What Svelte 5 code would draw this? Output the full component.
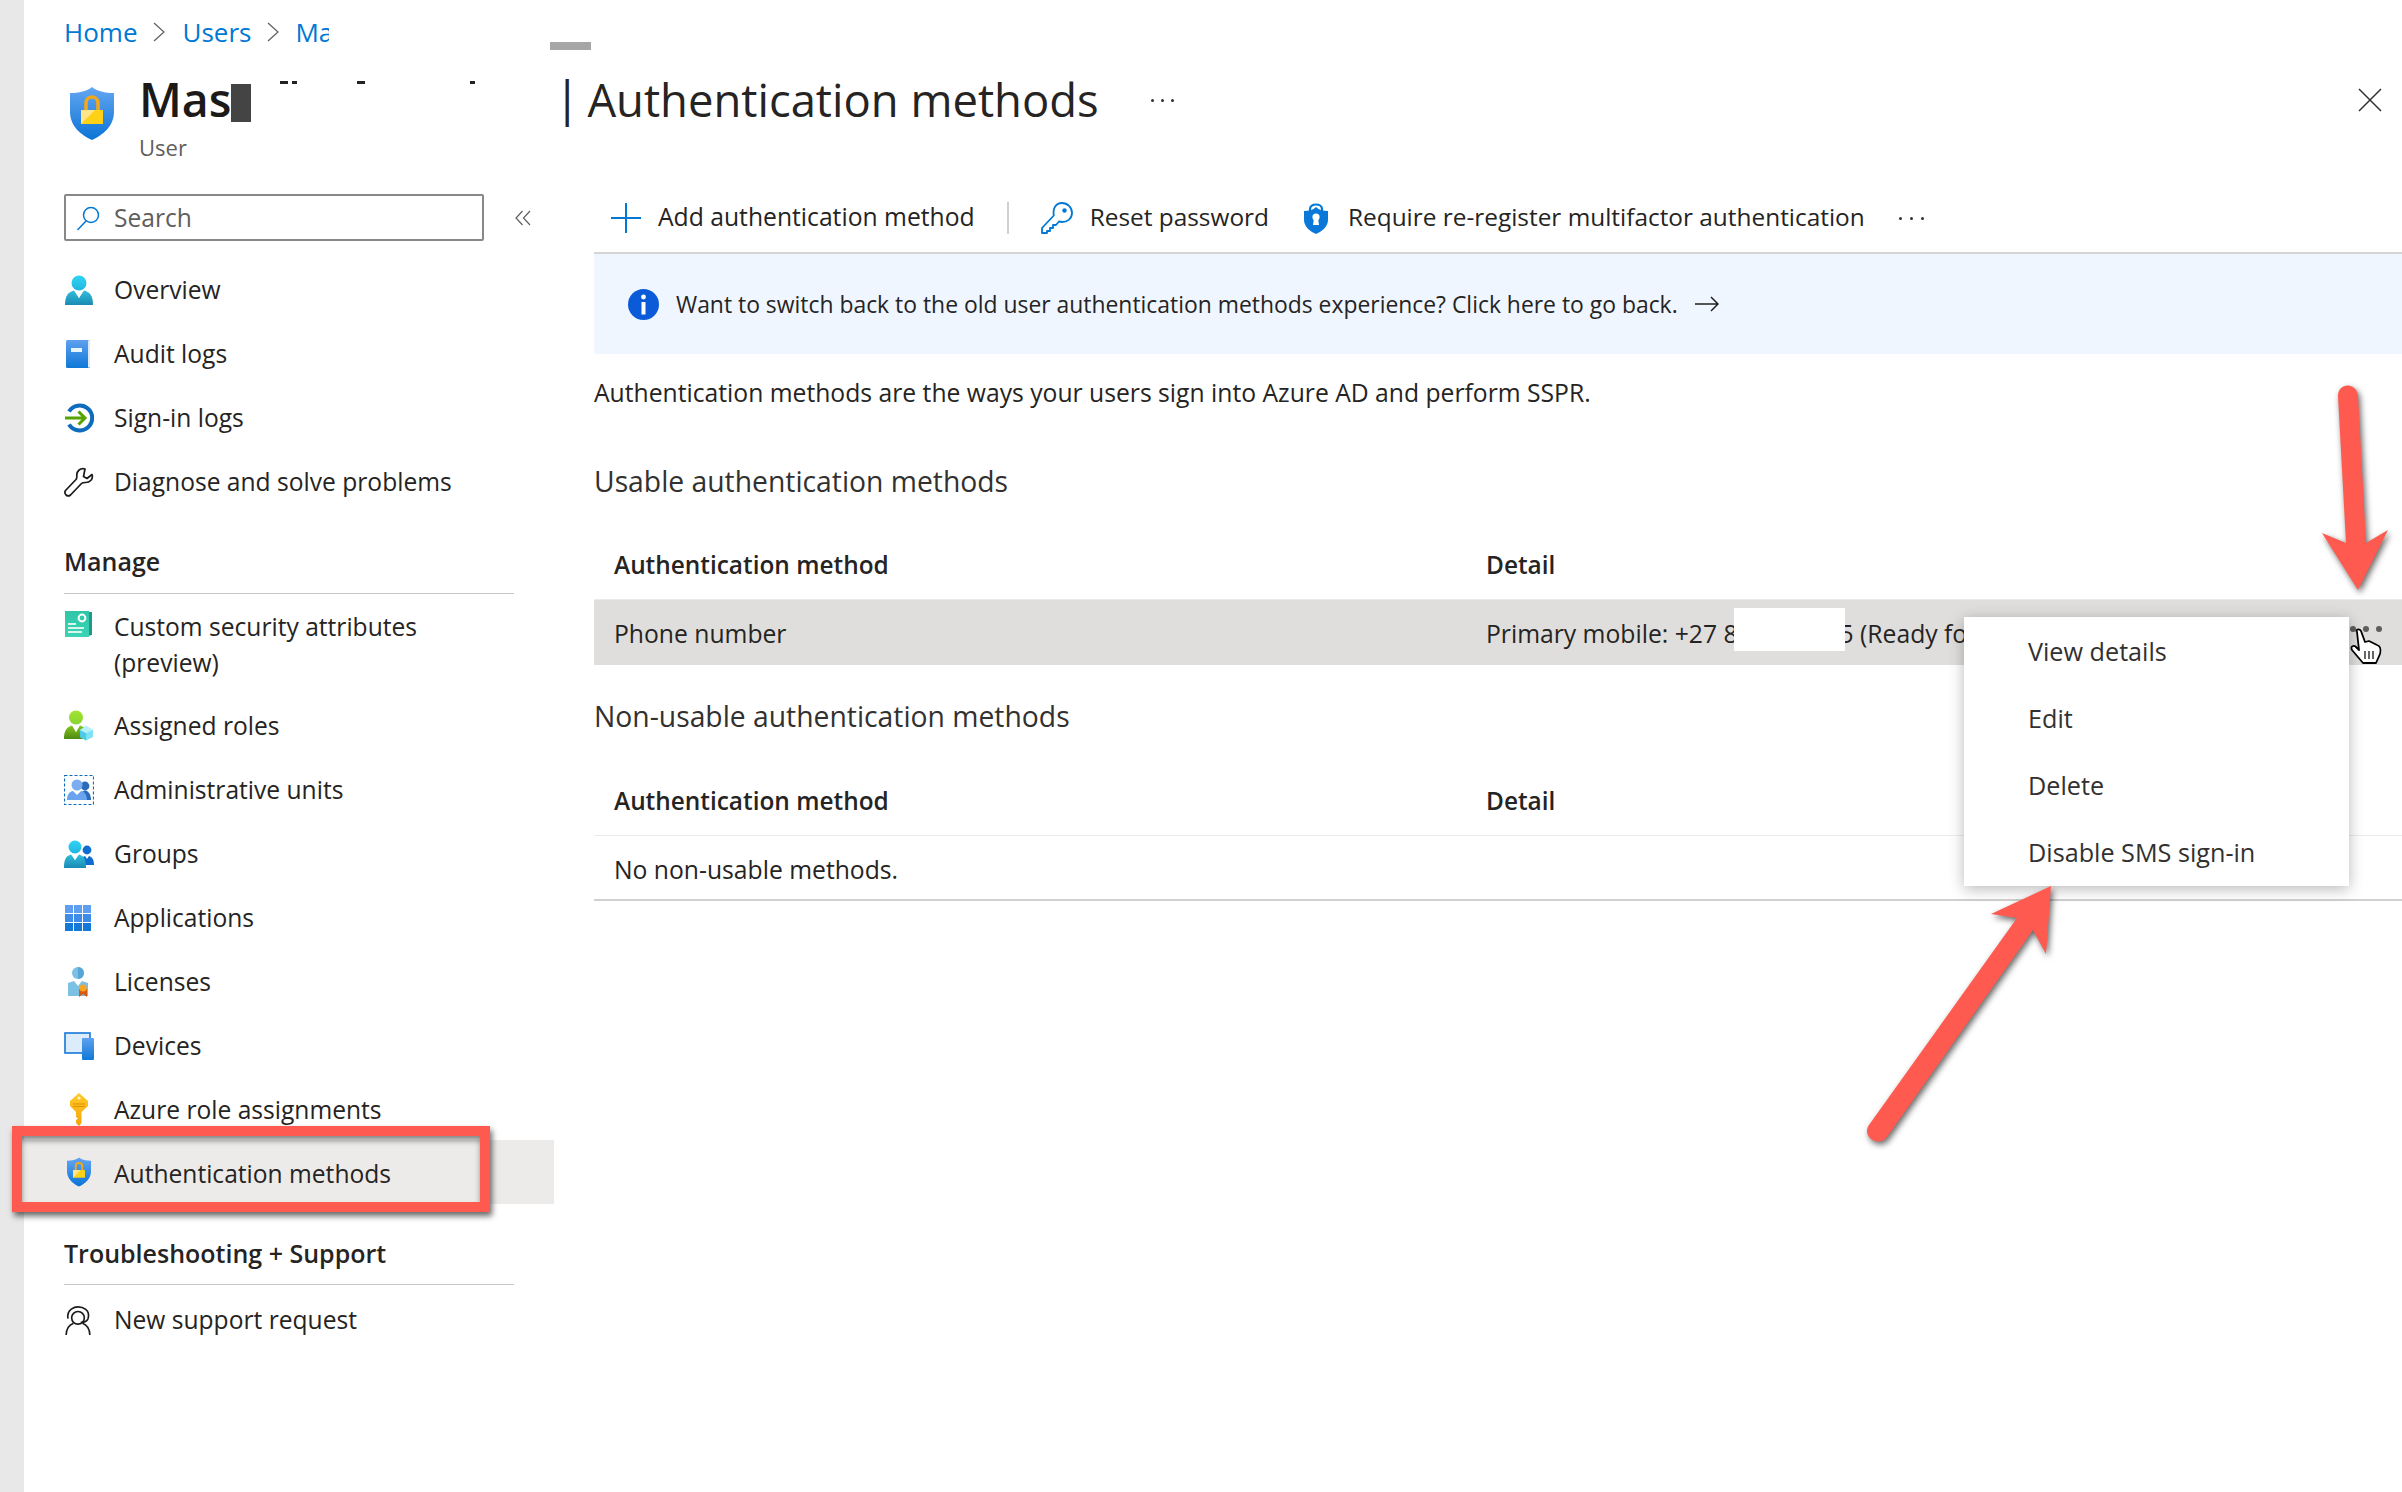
<script>
  const top = [
    { id: 'person', label: 'Overview' },
    { id: 'book', label: 'Audit logs' },
    { id: 'signin', label: 'Sign-in logs' },
    { id: 'wrench', label: 'Diagnose and solve problems' }
  ];
  const manage = [
    { id: 'card', label: 'Custom security attributes (preview)', tall: true },
    { id: 'roles', label: 'Assigned roles' },
    { id: 'admin', label: 'Administrative units' },
    { id: 'groups', label: 'Groups' },
    { id: 'apps', label: 'Applications' },
    { id: 'license', label: 'Licenses' },
    { id: 'devices', label: 'Devices' },
    { id: 'key', label: 'Azure role assignments' },
    { id: 'shield', label: 'Authentication methods', active: true }
  ];
  const menu = ['View details', 'Edit', 'Delete', 'Disable SMS sign-in'];
</script>

{#snippet shield(w, h)}
  <svg width={w} height={h} viewBox="0 0 44 53">
    <path d="M22 0C27 4 35 6 44 6V25C44 39 33 48 22 53C11 48 0 39 0 25V6C9 6 17 4 22 0Z" fill="url(#gShield)" />
    <path d="M16 24V16C16 8 28 8 28 16V24" fill="none" stroke="#f0a81c" stroke-width="3.6" />
    <rect x="11" y="23" width="22" height="14" fill="#fcd116" />
    <path d="M11 37L25 23H11Z" fill="#ffe58a" />
  </svg>
{/snippet}

{#snippet icon(id)}
  {#if id === 'person'}
    <svg width="30" height="30" viewBox="0 0 30 30">
      <circle cx="15" cy="8" r="7.5" fill="url(#gCyan)" />
      <path d="M1 30C1 21 4 17 10 15.5L15 23L20 15.5C26 17 29 21 29 30Z" fill="url(#gCyanB)" />
      <path d="M12 17L15 23L18 17Z" fill="#fff" />
    </svg>
  {:else if id === 'book'}
    <svg width="28" height="30" viewBox="0 0 28 30">
      <rect x="2" y="1" width="24" height="28" rx="1.5" fill="url(#gBlue)" />
      <rect x="24" y="1.5" width="2" height="27" fill="#dcebfa" />
      <rect x="7" y="9" width="11" height="4" fill="#eaf4fd" />
    </svg>
  {:else if id === 'signin'}
    <svg width="30" height="30" viewBox="0 0 30 30">
      <path d="M5 8.5A12.5 12.5 0 1 1 5 21.5" fill="none" stroke="#0f6cbd" stroke-width="4" />
      <path d="M1 15H21M14.5 8.5L21 15L14.5 21.5" fill="none" stroke="#57a300" stroke-width="3" />
    </svg>
  {:else if id === 'wrench'}
    <svg width="30" height="30" viewBox="0 0 30 30">
      <path d="M28 7.5L23 11.5L19.5 9.5L21 2C16.5.5 12.5 4 12.8 8.5C12.9 10 13 11.5 12 12.5L1.5 23.5C-.5 27 3.5 30.5 6.5 28L17.5 16.5C18.5 15.5 20 15.5 21.5 15.5C26 15.5 29.5 12 28 7.5Z" fill="#fff" stroke="#1b1a19" stroke-width="1.7" stroke-linejoin="round" />
    </svg>
  {:else if id === 'card'}
    <svg width="30" height="30" viewBox="0 0 30 30">
      <path d="M3 3H28V26L20 28H3Z" fill="#1d9a8a" />
      <rect x="1" y="2" width="24" height="26" fill="url(#gTeal)" />
      <circle cx="18" cy="9" r="3.4" fill="none" stroke="#fff" stroke-width="2" />
      <path d="M4 15H12M4 19H20M4 23H18" stroke="#d8f5ee" stroke-width="1.8" />
    </svg>
  {:else if id === 'roles'}
    <svg width="30" height="32" viewBox="0 0 30 32">
      <circle cx="12" cy="7.5" r="7" fill="url(#gGreen)" />
      <path d="M0 29C0 20 3 17 8 15.5L12 22L16 15.5C21 17 24 20 24 29Z" fill="url(#gGreenB)" />
      <path d="M10 17L12 22L14 17Z" fill="#fff" />
      <path d="M22 16L29 20V27L22 30.5L16 27V20Z" fill="#7de3f4" />
      <path d="M22 23V30.5L16 27V20Z" fill="#4fc9e8" />
      <path d="M22 23L29 20L22 16L16 20Z" fill="#b6f0fa" />
    </svg>
  {:else if id === 'admin'}
    <svg width="30" height="30" viewBox="0 0 30 30">
      <rect x=".5" y=".5" width="29" height="29" fill="#fff" stroke="#0f6cbd" stroke-width="1.2" stroke-dasharray="3 2" />
      <circle cx="21" cy="11" r="4.4" fill="#2b6cb8" />
      <path d="M16 25C16 19 18 16 21 15.500C25 16 27 20 27 25Z" fill="#2b6cb8" />
      <circle cx="13" cy="10" r="5.500" fill="#7aaef0" />
      <path d="M3 25C3 19 6 16.500 9 16L13 20L17 16C20 16.500 23 19 23 25Z" fill="#6aa3ee" />
    </svg>
  {:else if id === 'groups'}
    <svg width="30" height="30" viewBox="0 0 30 30">
      <circle cx="23" cy="11" r="4.4" fill="#0f6cd0" />
      <path d="M16 26C16 20 18 18 21 17L23 20L25 17C28 18 30 20 30 26Z" fill="#0f6cd0" />
      <circle cx="11" cy="8" r="6.5" fill="url(#gCyan)" />
      <path d="M0 29C0 20 2 17 7 15.5L11 21L15 15.5C20 17 22 20 22 29Z" fill="url(#gCyanB)" />
      <path d="M9 17L11 21L13 17Z" fill="#fff" />
    </svg>
  {:else if id === 'apps'}
    <svg width="28" height="28" viewBox="0 0 28 28">
      <g fill="#5ea0ef"><rect x="1" y="1" width="8" height="8" /><rect x="10" y="1" width="8" height="8" /><rect x="19" y="1" width="8" height="8" /></g>
      <g fill="#3d8ce8"><rect x="1" y="10" width="8" height="8" /><rect x="10" y="10" width="8" height="8" /><rect x="19" y="10" width="8" height="8" /></g>
      <g fill="#1478d8"><rect x="1" y="19" width="8" height="8" /><rect x="10" y="19" width="8" height="8" /><rect x="19" y="19" width="8" height="8" /></g>
    </svg>
  {:else if id === 'license'}
    <svg width="30" height="32" viewBox="0 0 30 32">
      <circle cx="14" cy="7" r="6" fill="#7cc0e4" />
      <path d="M14 1A6 6 0 0 1 14 13Z" fill="#58a6d6" />
      <path d="M4 30V17L10 15L14 20L18 15L24 17V30Z" fill="#7cc0e4" />
      <path d="M15 23H23V31L19 28L15 31Z" fill="#d9590f" />
      <circle cx="19" cy="22" r="3.6" fill="#f6a623" />
    </svg>
  {:else if id === 'devices'}
    <svg width="30" height="30" viewBox="0 0 30 30">
      <rect x="1" y="2" width="25" height="20" fill="#dcecfb" stroke="#1478d8" stroke-width="1.6" />
      <rect x="18" y="7" width="12" height="22" rx="1" fill="url(#gBlue)" />
    </svg>
  {:else if id === 'key'}
    <svg width="30" height="34" viewBox="-5 0 30 34">
      <path d="M10 0L19 8V13L12.5 19V30L10 33L7 30V27L9 25.5L7 24V19L1 13V8Z" fill="url(#gKey)" />
      <circle cx="10" cy="5" r="1.6" fill="#fff6c8" />
      <path d="M4 11H16M4 13.5H16" stroke="#e08a00" stroke-width=".9" />
    </svg>
  {:else if id === 'shield'}
    <span class="shift">{@render shield(24, 30)}</span>
  {:else if id === 'support'}
    <svg width="28" height="30" viewBox="0 0 30 33">
      <g fill="none" stroke="#1b1a19" stroke-width="1.8">
        <circle cx="15" cy="13" r="7" />
        <path d="M4 14C2 3 12 1 15 1C20 1 29 4 26 14C25 17 22 18 18 18" />
        <path d="M2 32C2 25 5 21 10 19M28 32C28 25 25 21 20 19" />
      </g>
    </svg>
  {/if}
{/snippet}

{#snippet navrow(item)}
  <div class="row" class:tall={item.tall} class:active={item.active} class:last={item.id === 'support'}>
    <span class="ico">{@render icon(item.id)}</span>
    <span class="lbl">{item.label}</span>
  </div>
{/snippet}

<svg class="defs" width="0" height="0" aria-hidden="true">
  <defs>
    <linearGradient id="gShield" x1="0" y1="0" x2="0" y2="1"><stop offset="0" stop-color="#65a6f2" /><stop offset="1" stop-color="#0a74d6" /></linearGradient>
    <linearGradient id="gCyan" x1="0" y1="0" x2="0" y2="1"><stop offset="0" stop-color="#32d4f5" /><stop offset="1" stop-color="#1fb6df" /></linearGradient>
    <linearGradient id="gCyanB" x1="0" y1="0" x2="0" y2="1"><stop offset="0" stop-color="#32bedd" /><stop offset="1" stop-color="#198ab3" /></linearGradient>
    <linearGradient id="gBlue" x1="0" y1="0" x2="0" y2="1"><stop offset="0" stop-color="#5ea0ef" /><stop offset="1" stop-color="#0f78d8" /></linearGradient>
    <linearGradient id="gTeal" x1="0" y1="0" x2="0" y2="1"><stop offset="0" stop-color="#2fc6a8" /><stop offset="1" stop-color="#3cd4b4" /></linearGradient>
    <linearGradient id="gGreen" x1="0" y1="0" x2="0" y2="1"><stop offset="0" stop-color="#a4e32d" /><stop offset="1" stop-color="#86d633" /></linearGradient>
    <linearGradient id="gGreenB" x1="0" y1="0" x2="0" y2="1"><stop offset="0" stop-color="#86c61e" /><stop offset="1" stop-color="#4c8a12" /></linearGradient>
    <linearGradient id="gKey" x1="0" y1="0" x2="0" y2="1"><stop offset="0" stop-color="#ffca28" /><stop offset="1" stop-color="#f5a50a" /></linearGradient>
  </defs>
</svg>

<div class="page">
  <div class="strip"></div>

  <aside class="side">
    <nav class="crumbs">
      <a href="#home">Home</a><svg class="chev" width="12" height="20" viewBox="0 0 12 20"><path d="M1 1L11 10L1 19" fill="none" stroke="#605e5c" stroke-width="1.2" /></svg>
      <a class="users" href="#users">Users</a><svg class="chev" width="12" height="20" viewBox="0 0 12 20"><path d="M1 1L11 10L1 19" fill="none" stroke="#605e5c" stroke-width="1.2" /></svg>
      <a class="clip" href="#ma">Ma</a>
    </nav>
    <header class="res">
      <span class="res-ico">{@render shield(44, 53)}</span>
      <div>
        <div class="res-name">Mas<span class="block"></span></div>
        <div class="res-type">User</div>
      </div>
    </header>
    <div class="searchline">
      <label class="search">
        <svg width="24" height="26" viewBox="0 0 24 26"><circle cx="15" cy="10" r="7.5" fill="none" stroke="#0078d4" stroke-width="1.5" /><path d="M10 16L1.5 25" stroke="#0078d4" stroke-width="1.5" /></svg>
        <span>Search</span>
      </label>
      <svg class="collapse" width="16" height="16" viewBox="0 0 16 16"><path d="M7.500 1L1 8L7.500 15M15 1L8.500 8L15 15" fill="none" stroke="#605e5c" stroke-width="1.2" /></svg>
    </div>
    {#each top as item}{@render navrow(item)}{/each}
    <h3 class="sect">Manage</h3>
    {#each manage as item}{@render navrow(item)}{/each}
    <h3 class="sect sect2">Troubleshooting + Support</h3>
    {@render navrow({ id: 'support', label: 'New support request' })}
  </aside>

  <main class="main">
    <div class="titlebar">
      <h1><span class="pipe">|</span>Authentication methods</h1>
      <span class="tdots"><i></i><i></i><i></i></span>
      <svg class="close" width="24" height="24" viewBox="0 0 24 24"><path d="M1 1L23 23M23 1L1 23" stroke="#323130" stroke-width="1.5" /></svg>
    </div>
    <div class="toolbar">
      <span class="tool">
        <svg width="30" height="30" viewBox="0 0 30 30"><path d="M15 0V30M0 15H30" stroke="#0078d4" stroke-width="2" /></svg>
        Add authentication method
      </span>
      <span class="sep"></span>
      <span class="tool narrow">
        <svg width="32" height="32" viewBox="0 0 32 32"><path d="M21 1C26.500 1 31 5.500 31 11C31 16.500 26.500 20 21 20L18 19.500L15 23H12V26H9V29H6V31H1V26L12.800 13.500C11.500 6 15 1 21 1Z" fill="none" stroke="#0078d4" stroke-width="1.800" stroke-linejoin="round" /><circle cx="23.500" cy="8.500" r="2.200" fill="#0078d4" /></svg>
        Reset password
      </span>
      <span class="tool narrow tool3">
        <svg width="24" height="32" viewBox="0 0 24 32"><path d="M6 9V7C6 1 18 1 18 7V9" fill="none" stroke="#0078d4" stroke-width="2.200" /><path d="M12 5C15 8 19 9 24 9V18C24 25 17 30 12 32C7 30 0 25 0 18V9C5 9 9 8 12 5Z" fill="#0a78d8" /><circle cx="12" cy="15" r="3.600" fill="#fff" /><path d="M10 16H14L15 23H9Z" fill="#fff" /></svg>
        Require re-register multifactor authentication
      </span>
      <span class="tooldots"><i></i><i></i><i></i></span>
    </div>
    <div class="banner">
      <svg width="31" height="31" viewBox="0 0 31 31"><circle cx="15.500" cy="15.500" r="15.500" fill="#0b5bd8" /><circle cx="15.500" cy="8" r="2.400" fill="#fff" /><rect x="13.500" y="13" width="4" height="12.500" fill="#fff" /></svg>
      <span class="bantext">Want to switch back to the old user authentication methods experience? Click here to go back.</span>
      <svg width="24" height="16" viewBox="0 0 24 16"><path d="M0 8H23M16 1L23 8L16 15" fill="none" stroke="#201f1e" stroke-width="1.500" /></svg>
    </div>
    <p class="desc">Authentication methods are the ways your users sign into Azure AD and perform SSPR.</p>

    <h2 class="h2">Usable authentication methods</h2>
    <div class="thead"><b>Authentication method</b><b>Detail</b></div>
    <div class="trow selected"><span>Phone number</span><span>Primary mobile: +27 8<span class="ph"></span>5 (Ready for SMS sign-in)</span></div>

    <h2 class="h2 h2b">Non-usable authentication methods</h2>
    <div class="thead thead2"><b>Authentication method</b><b>Detail</b></div>
    <div class="trow empty"><span>No non-usable methods.</span></div>
  </main>

  <span class="graybar"></span>
  <span class="bit b1"></span><span class="bit b2"></span><span class="bit b3"></span><span class="bit b4"></span>
  <span class="whitebox"></span>
  <span class="rowdots"><i></i><i></i><i></i></span>

  <div class="menu">
    {#each menu as m}<div class="mi">{m}</div>{/each}
  </div>

  <div class="redbox"></div>

  <svg class="overlay" width="2402" height="1492" viewBox="0 0 2402 1492">
    <g class="arrow">
      <path fill="#ff5a4f" d="M2338 396C2338 382 2357 382 2358 396L2366 543L2388 530L2358 590L2322 533L2346 543Z" />
    </g>
    <g class="arrow">
      <path fill="#ff5a4f" d="M2051 886L2046 954L2033 930L1887 1137C1879 1148 1861 1137 1869 1125L2017 918L1991 914Z" />
    </g>
    <g>
      <path d="M2357 632C2355 630 2359 628 2361 631L2365 642L2369 641L2373 643L2377 645C2381 646 2381 650 2380 654L2376 663L2363 663L2352 650C2350 646 2354 645 2356 647L2359 650Z" fill="#fff" stroke="#000" stroke-width="1.800" stroke-linejoin="round" />
      <path d="M2365 651V659M2369 651V659M2373 651V659" stroke="#000" stroke-width="1.200" />
    </g>
  </svg>
</div>

<style>
  :global(body) { margin: 0; background: #fff; }
  .defs { position: absolute; }
  .page {
    position: relative;
    display: flex;
    width: 2402px;
    height: 1492px;
    overflow: hidden;
    background: #fff;
    color: #252423;
    font-family: "Open Sans", "Noto Sans", sans-serif;
    font-size: 24.7px;
  }
  .strip { width: 24px; flex: none; background: #e8e8e8; }
  .side { width: 530px; flex: none; font-size: 24.6px; }
  .crumbs { height: 64px; padding-left: 40px; display: flex; align-items: center; gap: 16px; font-size: 26px; }
  .crumbs a { color: #0078d4; text-decoration: none; }
  .users { margin-left: 1px; }
  .clip { display: block; width: 34px; overflow: hidden; }
  .chev { flex: none; }
  .res { height: 130px; padding-left: 46px; display: flex; box-sizing: border-box; gap: 25px; }
  .res-ico { margin-top: 23px; }
  .res-name { font-size: 46.5px; font-weight: 600; height: 72px; line-height: 70px; color: #1b1a19; display: flex; }
  .block { display: block; width: 20px; height: 38px; background: #444; margin-top: 20px; }
  .res-type { font-size: 22px; color: #605e5c; line-height: 30px; margin-top: -4px; }
  .searchline { display: flex; align-items: center; padding-left: 40px; margin-bottom: 17px; gap: 31px; }
  .search {
    width: 420px; height: 47px; box-sizing: border-box;
    border: 2px solid #8a8886; border-radius: 2px;
    display: flex; align-items: center; gap: 14px; padding-left: 10px;
    color: #605e5c;
  }
  .row { height: 64px; display: flex; align-items: center; padding-left: 40px; }
  .lbl { padding-bottom: 2px; }
  .row.tall { height: 100px; align-items: flex-start; padding-top: 15px; box-sizing: border-box; }
  .row.active { background: #edebe9; margin: -2px 0 2px; }
  .row.active .lbl { padding: 2px 0 0; }
  .row.last { margin-top: 3px; }
  .row.last .ico { padding-top: 2px; }
  .ico { width: 50px; flex: none; display: flex; justify-content: flex-start; }
  .shift { margin-left: 3px; display: flex; }
  .row.tall .lbl { width: 340px; line-height: 36px; }
  .sect {
    margin: 0 0 0 40px; width: 450px; box-sizing: content-box;
    height: 79px; line-height: 94px; font-size: 25px; font-weight: 600;
    border-bottom: 1.500px solid #c8c6c4;
    color: #252423;
  }
  .sect2 { height: 78px; }
  .main { flex: 1; min-width: 0; padding-left: 40px; }
  .titlebar { height: 130px; padding-top: 68px; box-sizing: border-box; display: flex; align-items: center; position: relative; }
  h1 { margin: 0 0 0 -40px; font-size: 45.4px; font-weight: 400; color: #252423; white-space: nowrap; display: flex; align-items: center; }
  .pipe { font-size: 48px; margin-right: 7px; margin-top: -3px; }
  .tdots { margin-left: 52px; display: inline-flex; gap: 7px; padding-top: 2px; }
  .tdots i { width: 3px; height: 3px; border-radius: 50%; background: #323130; }
  .close { position: absolute; right: 20px; top: 88px; }
  .toolbar {
    margin-top: 54px; height: 68px; box-sizing: content-box;
    border-bottom: 2px solid #d6d5d4;
    display: flex; align-items: center; padding-left: 17px;
  }
  .tool { display: inline-flex; align-items: center; gap: 17px; white-space: nowrap; line-height: 30px; padding-bottom: 2px; }
  .tool svg { margin-top: 2px; }
  .narrow { font-size: 24.4px; }
  .tool3 { margin-left: 35px; gap: 20px; }
  .sep { width: 2px; height: 32px; background: #d2d0ce; margin: 0 32px; }
  .tooldots { display: inline-flex; gap: 8px; margin-left: 34px; }
  .tooldots i { width: 3px; height: 3px; border-radius: 50%; background: #323130; }
  .banner {
    height: 100px; background: #eff6ff; display: flex; align-items: center;
    padding-left: 34px; gap: 17px; border-radius: 0 0 0 3px;
  }
  .bantext { white-space: nowrap; font-size: 22.9px; }
  .desc { margin: 0; height: 77px; line-height: 77px; white-space: nowrap; }
  .h2 { margin: 0; height: 100px; line-height: 100px; font-size: 28.3px; font-weight: 400; color: #323130; white-space: nowrap; }
  .h2b { height: 103px; line-height: 103px; }
  .thead, .trow { display: grid; grid-template-columns: 872px 1fr; padding-left: 20px; white-space: nowrap; align-items: center; }
  .thead { height: 68px; font-weight: 600; font-size: 24.4px; border-bottom: 1.500px solid #edebe9; }
  .thead b { font-weight: 600; padding-bottom: 2px; }
  .thead2 { height: 67px; }
  .trow { height: 65px; }
  .selected { background: #dfdedc; overflow: hidden; padding-top: 1px; box-sizing: border-box; }
  .empty { border-bottom: 2px solid #d2d0ce; height: 59px; padding-top: 4px; box-sizing: content-box; }
  .ph { display: inline-block; width: 102px; }
  .whitebox { position: absolute; left: 1734px; top: 608px; width: 111px; height: 43px; background: #fff; }
  .graybar { position: absolute; left: 550px; top: 42px; width: 41px; height: 8px; background: #a6a6a6; }
  .bit { position: absolute; top: 81px; height: 3px; background: #222; }
  .b1 { left: 280px; width: 8px; }
  .b2 { left: 292px; width: 5px; }
  .b3 { left: 357px; width: 8px; }
  .b4 { left: 470px; width: 5px; }
  .rowdots { position: absolute; left: 2350px; top: 626px; display: flex; gap: 7px; }
  .rowdots i { width: 6px; height: 6px; border-radius: 50%; background: #605e5c; }
  .menu {
    position: absolute; left: 1964px; top: 617px; width: 385px; height: 269px;
    background: #fff; box-shadow: 0 3px 14px rgba(0,0,0,.28);
    display: flex; flex-direction: column; padding-top: 1px; box-sizing: border-box; font-size: 25.2px;
  }
  .mi { height: 67px; line-height: 67px; padding-left: 64px; color: #323130; }
  .redbox {
    position: absolute; left: 12px; top: 1126px; width: 478px; height: 86px; box-sizing: border-box;
    border: 10px solid #ff5a4f;
    box-shadow: 2px 4px 6px rgba(0,0,0,.6), inset 0 5px 6px -1px rgba(0,0,0,.5);
  }
  .overlay { position: absolute; left: 0; top: 0; pointer-events: none; }
  .arrow { filter: drop-shadow(2px 3px 3px rgba(0,0,0,.6)); }
</style>
